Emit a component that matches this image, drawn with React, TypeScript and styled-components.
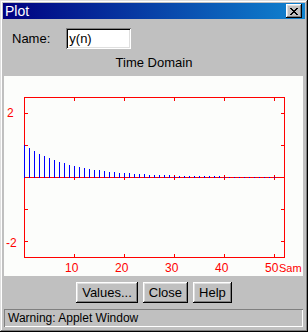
import styled, { createGlobalStyle } from "styled-components";

const GlobalStyle = createGlobalStyle`
  html, body {
    margin: 0;
    padding: 0;
    background: #c0c0c0;
  }
  body {
    font-family: "Liberation Sans", Arial, sans-serif;
    font-size: 12px;
    color: #000;
  }
`;

// chart geometry (svg coords inside the white plot panel)
const AXIS_LEFT = 20;
const AXIS_RIGHT = 280;
const AXIS_TOP = 21;
const AXIS_BOTTOM = 181;
const ZERO_Y = 101;
const PX_PER_UNIT = 32;
const PX_PER_SAMPLE = 5;

const X_TICKS = [10, 20, 30, 40, 50];
const Y_TICKS = [2, 1, -1, -2];

const sampleX = (n: number) => AXIS_LEFT + n * PX_PER_SAMPLE;
const valueY = (v: number) => ZERO_Y - v * PX_PER_UNIT;

function StemPlot() {
  // y(n) = 0.9^n, one stem per sample
  const stems = Array.from({ length: 51 }, (_, n) => ({
    n,
    h: Math.round(PX_PER_UNIT * Math.pow(0.9, n)),
  }));

  return (
    <svg width={299} height={200} shapeRendering="crispEdges">
      <g stroke="#ff0000" strokeWidth={1} fill="none">
        <rect
          x={AXIS_LEFT + 0.5}
          y={AXIS_TOP + 0.5}
          width={AXIS_RIGHT - AXIS_LEFT}
          height={AXIS_BOTTOM - AXIS_TOP}
        />
        <line x1={AXIS_LEFT} x2={AXIS_RIGHT} y1={ZERO_Y + 0.5} y2={ZERO_Y + 0.5} />
        {X_TICKS.map((t) => (
          <g key={t}>
            <line x1={sampleX(t) + 0.5} x2={sampleX(t) + 0.5} y1={AXIS_TOP} y2={AXIS_TOP + 4} />
            <line x1={sampleX(t) + 0.5} x2={sampleX(t) + 0.5} y1={AXIS_BOTTOM - 3} y2={AXIS_BOTTOM + 1} />
            <line x1={sampleX(t) + 0.5} x2={sampleX(t) + 0.5} y1={ZERO_Y - 2} y2={ZERO_Y + 3} />
          </g>
        ))}
        {Y_TICKS.map((t) => (
          <g key={t}>
            <line x1={AXIS_LEFT} x2={AXIS_LEFT + 4} y1={valueY(t) + 0.5} y2={valueY(t) + 0.5} />
            <line x1={AXIS_RIGHT - 3} x2={AXIS_RIGHT + 1} y1={valueY(t) + 0.5} y2={valueY(t) + 0.5} />
          </g>
        ))}
      </g>

      <g stroke="#0000ff" strokeWidth={1}>
        {stems.map((s) => (
          <line
            key={s.n}
            x1={sampleX(s.n) + 0.5}
            x2={sampleX(s.n) + 0.5}
            y1={ZERO_Y - s.h}
            y2={ZERO_Y + 1}
          />
        ))}
      </g>

      <g fill="#ff0000" fontFamily='"Liberation Sans", Arial, sans-serif' fontSize={12}>
        <text x={3} y={41}>2</text>
        <text x={2} y={171}>-2</text>
        {X_TICKS.map((t) => (
          <text key={t} x={sampleX(t) - 9} y={196}>
            {t}
          </text>
        ))}
        <text x={275} y={196} fontSize={11}>
          Sam
        </text>
      </g>
    </svg>
  );
}

function CloseGlyph() {
  return (
    <svg width={8} height={7} viewBox="0 0 8 7" shapeRendering="crispEdges">
      <path d="M0 0h2v1h1v1h2v-1h1v-1h2v1h-1v1h-1v1h-1v1h1v1h1v1h1v1h-2v-1h-1v-1h-2v1h-1v1h-2v-1h1v-1h1v-1h1v-1h-1v-1h-1v-1h-1z" fill="#000" />
    </svg>
  );
}

export default function App() {
  return (
    <>
      <GlobalStyle />
      <Window>
        <TitleBar>
          <TitleText>Plot</TitleText>
          <TitleButton aria-label="Close">
            <CloseGlyph />
          </TitleButton>
        </TitleBar>

        <NameRow>
          <FieldLabel>Name:</FieldLabel>
          <TextField defaultValue="y(n)" />
        </NameRow>

        <Caption>Time Domain</Caption>

        <PlotPanel>
          <StemPlot />
        </PlotPanel>

        <ButtonRow>
          <PushButton>Values...</PushButton>
          <PushButton>Close</PushButton>
          <PushButton>Help</PushButton>
        </ButtonRow>

        <StatusBar>Warning: Applet Window</StatusBar>
      </Window>
    </>
  );
}

// Styled Components

const Window = styled.div`
  width: 308px;
  height: 332px;
  box-sizing: border-box;
  padding: 3px;
  display: flex;
  flex-direction: column;
  background: #c0c0c0;
  box-shadow:
    inset -1px -1px #000,
    inset 1px 1px #dfdfdf,
    inset -2px -2px #808080,
    inset 2px 2px #fff;
`;

const TitleBar = styled.div`
  height: 16px;
  display: flex;
  align-items: center;
  justify-content: space-between;
  padding: 0 3px 0 2px;
  background: linear-gradient(to right, #000080, #1084d0);
`;

const TitleText = styled.span`
  color: #fff;
  font-size: 14px;
  line-height: 16px;
`;

const TitleButton = styled.button`
  width: 16px;
  height: 14px;
  padding: 0;
  border: none;
  display: flex;
  align-items: center;
  justify-content: center;
  background: #c0c0c0;
  box-shadow:
    inset -1px -1px #000,
    inset 1px 1px #fff,
    inset -2px -2px #808080,
    inset 2px 2px #dfdfdf;
`;

const NameRow = styled.div`
  margin-top: 9px;
  height: 21px;
  display: flex;
  align-items: center;
  padding-left: 9px;
  gap: 16px;
`;

const FieldLabel = styled.span`
  font-size: 13px;
`;

const TextField = styled.input`
  width: 65px;
  height: 21px;
  box-sizing: border-box;
  border: none;
  outline: none;
  padding: 0 3px;
  font-family: "Liberation Sans", Arial, sans-serif;
  font-size: 13px;
  color: #000;
  background: #fff;
  box-shadow:
    inset 1px 1px #808080,
    inset -1px -1px #fff,
    inset 2px 2px #000,
    inset -2px -2px #dfdfdf;
`;

const Caption = styled.div`
  height: 27px;
  display: flex;
  align-items: center;
  justify-content: center;
  font-size: 13px;
`;

const PlotPanel = styled.div`
  margin-left: 1px;
  width: 299px;
  height: 200px;
  background: #fcfdfb;
  overflow: hidden;

  svg {
    display: block;
  }
`;

const ButtonRow = styled.div`
  margin-top: 6px;
  height: 21px;
  display: flex;
  justify-content: center;
  gap: 5px;
`;

const PushButton = styled.button`
  height: 21px;
  padding: 0 6px;
  border: none;
  font-family: "Liberation Sans", Arial, sans-serif;
  font-size: 13px;
  color: #000;
  background: #c0c0c0;
  box-shadow:
    inset -1px -1px #000,
    inset 1px 1px #fff,
    inset -2px -2px #808080,
    inset 2px 2px #dfdfdf;
`;

const StatusBar = styled.div`
  margin-top: 6px;
  margin-left: 1px;
  width: 299px;
  height: 18px;
  box-sizing: border-box;
  padding-left: 4px;
  display: flex;
  align-items: center;
  font-size: 12px;
  box-shadow:
    inset 1px 1px #808080,
    inset -1px -1px #fff;
`;
